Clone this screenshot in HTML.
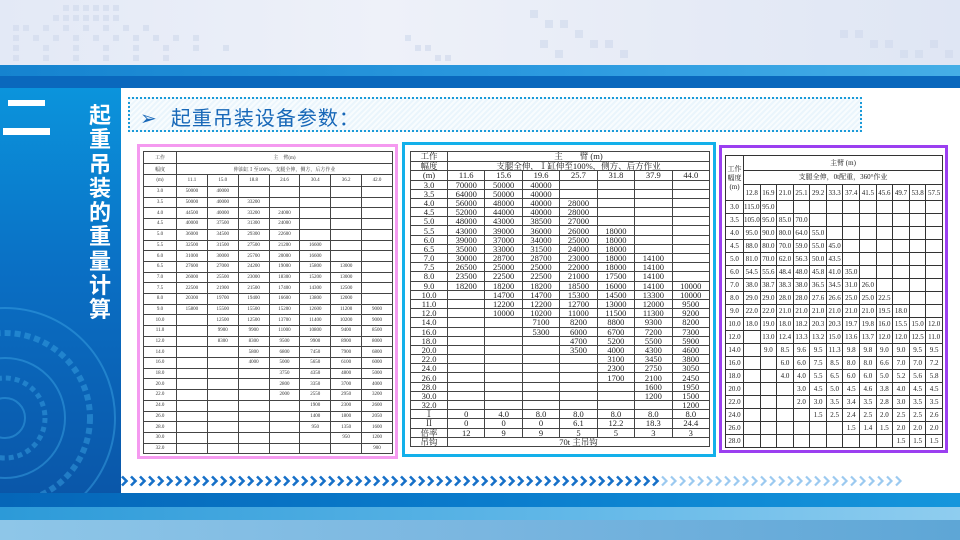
<!DOCTYPE html>
<html><head><meta charset="utf-8">
<style>
*{margin:0;padding:0;box-sizing:border-box}
body{width:960px;height:540px;overflow:hidden;position:relative;background:#fff;font-family:"Liberation Serif","Noto Serif CJK SC",serif}
.abs{position:absolute}
#top{left:0;top:0;width:960px;height:65px;background:linear-gradient(90deg,#e3e9f6,#eef1f9 40%,#e6ebf6 70%,#dfe6f4)}
#s1{left:0;top:65px;width:960px;height:11px;background:linear-gradient(90deg,#1583cf,#2d9be0 60%,#45aee6)}
#s2{left:0;top:76px;width:960px;height:12px;background:#0a68bd}
#left{left:0;top:88px;width:121px;height:409px;background:linear-gradient(180deg,#0b94dc,#0a6fc4 45%,#0a56a8)}
#b1{left:0;top:493px;width:960px;height:14px;background:linear-gradient(90deg,#0566b8,#0a7ccc 50%,#1596dc)}
#b2{left:0;top:507px;width:960px;height:13px;background:linear-gradient(90deg,#2c9ad8,#62b8e8 60%,#8fcdef)}
#b3{left:0;top:520px;width:960px;height:20px;background:linear-gradient(90deg,#8ec6e8,#7ab6e0 50%,#5ea6d6)}
.vt{color:#fff;font-family:"Liberation Sans","Noto Sans CJK SC",sans-serif;font-weight:bold;font-size:22px;line-height:24.3px;width:24px;text-align:center}
#hdr{left:128px;top:97px;width:734px;height:35px;border:2px dotted #1a9ad8;background:repeating-linear-gradient(135deg,#eaf5fc 0 2px,#f8fcfe 2px 4px)}
#hdr span{position:absolute;left:10px;top:3px;font-family:"Liberation Sans","Noto Sans CJK SC",sans-serif;font-size:20px;color:#1868b8;letter-spacing:1px}
table{border-collapse:collapse;table-layout:fixed;position:absolute;background:#fff}
td{border:1px solid #444;text-align:center;padding:0;overflow:hidden;white-space:nowrap}
#t1 td{font-size:5px;height:10.7px;color:#333}
#t1 .h td{height:11.7px}
#t2 td{font-size:8.5px;height:9.2px;line-height:8px;color:#222}
#t2 .h td{height:9.5px}
#t3 td{font-size:7px;height:13px;color:#222;border-color:#333}
#t3 .h td{height:14.5px}
</style></head><body>
<div class="abs" id="top">
<svg width="960" height="65" style="position:absolute;left:0;top:0">
<g fill="#d3dcee" opacity=".7">
<rect x="63" y="5" width="6" height="6"/><rect x="73" y="5" width="6" height="6"/><rect x="83" y="5" width="6" height="6"/><rect x="93" y="5" width="6" height="6"/><rect x="103" y="5" width="6" height="6"/><rect x="113" y="5" width="6" height="6"/>
<rect x="53" y="15" width="6" height="6"/><rect x="63" y="15" width="6" height="6"/><rect x="73" y="15" width="6" height="6"/><rect x="83" y="15" width="6" height="6"/><rect x="93" y="15" width="6" height="6"/><rect x="103" y="15" width="6" height="6"/><rect x="113" y="15" width="6" height="6"/>
<rect x="13" y="25" width="6" height="6"/><rect x="23" y="25" width="6" height="6"/><rect x="43" y="25" width="6" height="6"/><rect x="63" y="25" width="6" height="6"/><rect x="83" y="25" width="6" height="6"/><rect x="103" y="25" width="6" height="6"/><rect x="123" y="25" width="6" height="6"/><rect x="143" y="25" width="6" height="6"/>
<rect x="13" y="35" width="6" height="6"/><rect x="33" y="35" width="6" height="6"/><rect x="53" y="35" width="6" height="6"/><rect x="73" y="35" width="6" height="6"/><rect x="93" y="35" width="6" height="6"/><rect x="113" y="35" width="6" height="6"/><rect x="133" y="35" width="6" height="6"/><rect x="153" y="35" width="6" height="6"/><rect x="173" y="35" width="6" height="6"/><rect x="193" y="35" width="6" height="6"/>
<rect x="13" y="45" width="6" height="6"/><rect x="43" y="45" width="6" height="6"/><rect x="73" y="45" width="6" height="6"/><rect x="103" y="45" width="6" height="6"/><rect x="133" y="45" width="6" height="6"/><rect x="163" y="45" width="6" height="6"/><rect x="193" y="45" width="6" height="6"/><rect x="223" y="45" width="6" height="6"/>
<rect x="13" y="55" width="6" height="6"/><rect x="43" y="55" width="6" height="6"/><rect x="73" y="55" width="6" height="6"/><rect x="103" y="55" width="6" height="6"/><rect x="133" y="55" width="6" height="6"/><rect x="163" y="55" width="6" height="6"/>
<rect x="405" y="35" width="6" height="6"/><rect x="415" y="45" width="6" height="6"/><rect x="425" y="45" width="6" height="6"/><rect x="435" y="55" width="6" height="6"/><rect x="445" y="55" width="6" height="6"/>
<rect x="530" y="10" width="8" height="8"/><rect x="545" y="20" width="8" height="8"/><rect x="560" y="20" width="8" height="8"/><rect x="575" y="30" width="8" height="8"/><rect x="590" y="40" width="8" height="8"/><rect x="605" y="40" width="8" height="8"/><rect x="540" y="40" width="8" height="8"/><rect x="555" y="50" width="8" height="8"/><rect x="620" y="50" width="8" height="8"/>
<rect x="840" y="30" width="8" height="8"/><rect x="855" y="30" width="8" height="8"/><rect x="870" y="40" width="8" height="8"/><rect x="885" y="40" width="8" height="8"/><rect x="900" y="50" width="8" height="8"/><rect x="915" y="50" width="8" height="8"/><rect x="930" y="40" width="8" height="8"/><rect x="945" y="50" width="8" height="8"/>
</g></svg></div>
<div class="abs" id="s1"></div><div class="abs" id="s2"></div>
<div class="abs" id="left">
<svg width="121" height="409" style="position:absolute;left:0;top:0" fill="none" stroke="#3fa8e6" stroke-opacity=".45">
<circle cx="5" cy="330" r="110" stroke-width="2"/><circle cx="5" cy="330" r="85" stroke-width="6" stroke-dasharray="6 4"/><circle cx="5" cy="330" r="60" stroke-width="2"/><circle cx="5" cy="330" r="40" stroke-width="5" stroke-dasharray="5 4"/><circle cx="5" cy="330" r="20" stroke-width="2"/>
</svg>
<div class="abs" style="left:8px;top:12px;width:37px;height:6px;background:#fff"></div>
<div class="abs" style="left:3px;top:40px;width:47px;height:7px;background:#fff"></div>
<div class="abs vt" style="left:88px;top:16px">起<br>重<br>吊<br>装<br>的<br>重<br>量<br>计<br>算</div>
</div>
<div class="abs" id="hdr"><span>➢&nbsp; 起重吊装设备参数：</span></div>

<div class="abs" style="left:137px;top:144px;width:261px;height:315px;border:3px solid #f59af0;background:#fff"></div>
<table id="t1" style="left:143px;top:151px;width:250px">
<colgroup><col style="width:33px"><col><col><col><col><col><col><col></colgroup>
<tr class="h"><td>工作</td><td colspan="7">主　臂(m)</td></tr>
<tr class="h"><td>幅度</td><td colspan="7">伸油缸Ⅰ至100%，支腿全伸，侧方，后方作业</td></tr>
<tr class="h"><td>(m)</td><td>11.1</td><td>15.0</td><td>18.8</td><td>24.6</td><td>30.4</td><td>36.2</td><td>42.0</td></tr>
<tr><td>3.0</td><td>50000</td><td>40000</td><td></td><td></td><td></td><td></td><td></td></tr>
<tr><td>3.5</td><td>50000</td><td>40000</td><td>33200</td><td></td><td></td><td></td><td></td></tr>
<tr><td>4.0</td><td>44500</td><td>40000</td><td>33200</td><td>24000</td><td></td><td></td><td></td></tr>
<tr><td>4.5</td><td>40000</td><td>37500</td><td>31300</td><td>24000</td><td></td><td></td><td></td></tr>
<tr><td>5.0</td><td>36000</td><td>34500</td><td>29300</td><td>22600</td><td></td><td></td><td></td></tr>
<tr><td>5.5</td><td>32500</td><td>31500</td><td>27500</td><td>21200</td><td>16600</td><td></td><td></td></tr>
<tr><td>6.0</td><td>31000</td><td>30000</td><td>25700</td><td>20000</td><td>16600</td><td></td><td></td></tr>
<tr><td>6.5</td><td>27600</td><td>27000</td><td>24200</td><td>19000</td><td>15800</td><td>13000</td><td></td></tr>
<tr><td>7.0</td><td>26000</td><td>25500</td><td>23000</td><td>18300</td><td>15200</td><td>13000</td><td></td></tr>
<tr><td>7.5</td><td>22500</td><td>21900</td><td>21500</td><td>17400</td><td>14300</td><td>12500</td><td></td></tr>
<tr><td>8.0</td><td>20300</td><td>19700</td><td>19400</td><td>16600</td><td>13800</td><td>12000</td><td></td></tr>
<tr><td>9.0</td><td>15800</td><td>15500</td><td>15500</td><td>15200</td><td>12600</td><td>11200</td><td>9000</td></tr>
<tr><td>10.0</td><td></td><td>12500</td><td>12500</td><td>13700</td><td>11400</td><td>10200</td><td>9000</td></tr>
<tr><td>11.0</td><td></td><td>9900</td><td>9900</td><td>11000</td><td>10800</td><td>9400</td><td>8500</td></tr>
<tr><td>12.0</td><td></td><td>8300</td><td>8300</td><td>9500</td><td>9900</td><td>8900</td><td>8000</td></tr>
<tr><td>14.0</td><td></td><td></td><td>5800</td><td>6800</td><td>7450</td><td>7900</td><td>6800</td></tr>
<tr><td>16.0</td><td></td><td></td><td>4000</td><td>5000</td><td>5650</td><td>6100</td><td>6000</td></tr>
<tr><td>18.0</td><td></td><td></td><td></td><td>3750</td><td>4350</td><td>4800</td><td>5000</td></tr>
<tr><td>20.0</td><td></td><td></td><td></td><td>2800</td><td>3350</td><td>3700</td><td>4000</td></tr>
<tr><td>22.0</td><td></td><td></td><td></td><td>2000</td><td>2550</td><td>2950</td><td>3200</td></tr>
<tr><td>24.0</td><td></td><td></td><td></td><td></td><td>1900</td><td>2300</td><td>2600</td></tr>
<tr><td>26.0</td><td></td><td></td><td></td><td></td><td>1400</td><td>1800</td><td>2050</td></tr>
<tr><td>28.0</td><td></td><td></td><td></td><td></td><td>950</td><td>1350</td><td>1600</td></tr>
<tr><td>30.0</td><td></td><td></td><td></td><td></td><td></td><td>950</td><td>1200</td></tr>
<tr><td>32.0</td><td></td><td></td><td></td><td></td><td></td><td></td><td>900</td></tr>
</table>

<div class="abs" style="left:402px;top:142px;width:314px;height:315px;border:3px solid #13b0ea;background:#fff"></div>
<table id="t2" style="left:410px;top:151px;width:300px">
<colgroup><col style="width:37px"><col><col><col><col><col><col><col></colgroup>
<tr class="h"><td>工作</td><td colspan="7">主　　臂 (m)</td></tr>
<tr class="h"><td>幅度</td><td colspan="7">支腿全伸，Ⅰ缸伸至100%，侧方、后方作业</td></tr>
<tr class="h"><td>(m)</td><td>11.6</td><td>15.6</td><td>19.6</td><td>25.7</td><td>31.8</td><td>37.9</td><td>44.0</td></tr>
<tr><td>3.0</td><td>70000</td><td>50000</td><td>40000</td><td></td><td></td><td></td><td></td></tr>
<tr><td>3.5</td><td>64000</td><td>50000</td><td>40000</td><td></td><td></td><td></td><td></td></tr>
<tr><td>4.0</td><td>56000</td><td>48000</td><td>40000</td><td>28000</td><td></td><td></td><td></td></tr>
<tr><td>4.5</td><td>52000</td><td>44000</td><td>40000</td><td>28000</td><td></td><td></td><td></td></tr>
<tr><td>5.0</td><td>48000</td><td>43000</td><td>38500</td><td>27000</td><td></td><td></td><td></td></tr>
<tr><td>5.5</td><td>43000</td><td>39000</td><td>36000</td><td>26000</td><td>18000</td><td></td><td></td></tr>
<tr><td>6.0</td><td>39000</td><td>37000</td><td>34000</td><td>25000</td><td>18000</td><td></td><td></td></tr>
<tr><td>6.5</td><td>35000</td><td>33000</td><td>31500</td><td>24000</td><td>18000</td><td></td><td></td></tr>
<tr><td>7.0</td><td>30000</td><td>28700</td><td>28700</td><td>23000</td><td>18000</td><td>14100</td><td></td></tr>
<tr><td>7.5</td><td>26500</td><td>25000</td><td>25000</td><td>22000</td><td>18000</td><td>14100</td><td></td></tr>
<tr><td>8.0</td><td>23500</td><td>22500</td><td>22500</td><td>21000</td><td>17500</td><td>14100</td><td></td></tr>
<tr><td>9.0</td><td>18200</td><td>18200</td><td>18200</td><td>18500</td><td>16000</td><td>14100</td><td>10000</td></tr>
<tr><td>10.0</td><td></td><td>14700</td><td>14700</td><td>15300</td><td>14500</td><td>13300</td><td>10000</td></tr>
<tr><td>11.0</td><td></td><td>12200</td><td>12200</td><td>12700</td><td>13000</td><td>12000</td><td>9500</td></tr>
<tr><td>12.0</td><td></td><td>10000</td><td>10200</td><td>11000</td><td>11500</td><td>11300</td><td>9200</td></tr>
<tr><td>14.0</td><td></td><td></td><td>7100</td><td>8200</td><td>8800</td><td>9300</td><td>8200</td></tr>
<tr><td>16.0</td><td></td><td></td><td>5300</td><td>6000</td><td>6700</td><td>7200</td><td>7300</td></tr>
<tr><td>18.0</td><td></td><td></td><td></td><td>4700</td><td>5200</td><td>5500</td><td>5900</td></tr>
<tr><td>20.0</td><td></td><td></td><td></td><td>3500</td><td>4000</td><td>4300</td><td>4600</td></tr>
<tr><td>22.0</td><td></td><td></td><td></td><td></td><td>3100</td><td>3450</td><td>3800</td></tr>
<tr><td>24.0</td><td></td><td></td><td></td><td></td><td>2300</td><td>2750</td><td>3050</td></tr>
<tr><td>26.0</td><td></td><td></td><td></td><td></td><td>1700</td><td>2100</td><td>2450</td></tr>
<tr><td>28.0</td><td></td><td></td><td></td><td></td><td></td><td>1600</td><td>1950</td></tr>
<tr><td>30.0</td><td></td><td></td><td></td><td></td><td></td><td>1200</td><td>1500</td></tr>
<tr><td>32.0</td><td></td><td></td><td></td><td></td><td></td><td></td><td>1200</td></tr>
<tr><td>Ⅰ</td><td>0</td><td>4.0</td><td>8.0</td><td>8.0</td><td>8.0</td><td>8.0</td><td>8.0</td></tr>
<tr><td>Ⅱ</td><td>0</td><td>0</td><td>0</td><td>6.1</td><td>12.2</td><td>18.3</td><td>24.4</td></tr>
<tr><td>倍率</td><td>12</td><td>9</td><td>9</td><td>5</td><td>5</td><td>3</td><td>3</td></tr>
<tr><td>吊钩</td><td colspan="7">70t 主吊钩</td></tr>
</table>

<div class="abs" style="left:719px;top:145px;width:229px;height:308px;border:3px solid #9b3ff0;background:#fff"></div>
<table id="t3" style="left:725px;top:155px;width:218px">
<colgroup><col style="width:18px"><col><col><col><col><col><col><col><col><col><col><col><col></colgroup>
<tr class="h"><td rowspan="3" style="white-space:normal;line-height:9px">工作幅度(m)</td><td colspan="12">主臂 (m)</td></tr>
<tr class="h"><td colspan="12">支腿全伸，0t配重，360°作业</td></tr>
<tr class="h" style="height:16px"><td>12.8</td><td>16.9</td><td>21.0</td><td>25.1</td><td>29.2</td><td>33.3</td><td>37.4</td><td>41.5</td><td>45.6</td><td>49.7</td><td>53.8</td><td>57.5</td></tr>
<tr><td>3.0</td><td>115.0</td><td>95.0</td><td></td><td></td><td></td><td></td><td></td><td></td><td></td><td></td><td></td><td></td></tr>
<tr><td>3.5</td><td>105.0</td><td>95.0</td><td>85.0</td><td>70.0</td><td></td><td></td><td></td><td></td><td></td><td></td><td></td><td></td></tr>
<tr><td>4.0</td><td>95.0</td><td>90.0</td><td>80.0</td><td>64.0</td><td>55.0</td><td></td><td></td><td></td><td></td><td></td><td></td><td></td></tr>
<tr><td>4.5</td><td>88.0</td><td>80.0</td><td>70.0</td><td>59.0</td><td>55.0</td><td>45.0</td><td></td><td></td><td></td><td></td><td></td><td></td></tr>
<tr><td>5.0</td><td>81.0</td><td>70.0</td><td>62.0</td><td>56.3</td><td>50.0</td><td>43.5</td><td></td><td></td><td></td><td></td><td></td><td></td></tr>
<tr><td>6.0</td><td>54.5</td><td>55.6</td><td>48.4</td><td>48.0</td><td>45.8</td><td>41.0</td><td>35.0</td><td></td><td></td><td></td><td></td><td></td></tr>
<tr><td>7.0</td><td>38.0</td><td>38.7</td><td>38.3</td><td>38.0</td><td>36.5</td><td>34.5</td><td>31.0</td><td>26.0</td><td></td><td></td><td></td><td></td></tr>
<tr><td>8.0</td><td>29.0</td><td>29.0</td><td>28.0</td><td>28.0</td><td>27.6</td><td>26.6</td><td>25.0</td><td>25.0</td><td>22.5</td><td></td><td></td><td></td></tr>
<tr><td>9.0</td><td>22.0</td><td>22.0</td><td>21.0</td><td>21.0</td><td>21.0</td><td>21.0</td><td>21.0</td><td>21.0</td><td>19.5</td><td>18.0</td><td></td><td></td></tr>
<tr><td>10.0</td><td>18.0</td><td>19.0</td><td>18.0</td><td>18.2</td><td>20.3</td><td>20.3</td><td>19.7</td><td>19.8</td><td>16.0</td><td>15.5</td><td>15.0</td><td>12.0</td></tr>
<tr><td>12.0</td><td></td><td>13.0</td><td>12.4</td><td>13.3</td><td>13.2</td><td>15.0</td><td>13.6</td><td>13.7</td><td>12.0</td><td>12.0</td><td>12.5</td><td>11.0</td></tr>
<tr><td>14.0</td><td></td><td>9.0</td><td>8.5</td><td>9.6</td><td>9.5</td><td>11.3</td><td>9.8</td><td>9.8</td><td>9.0</td><td>9.0</td><td>9.5</td><td>9.5</td></tr>
<tr><td>16.0</td><td></td><td></td><td>6.0</td><td>6.0</td><td>7.5</td><td>8.5</td><td>8.0</td><td>8.0</td><td>6.6</td><td>7.0</td><td>7.0</td><td>7.2</td></tr>
<tr><td>18.0</td><td></td><td></td><td>4.0</td><td>4.0</td><td>5.5</td><td>6.5</td><td>6.0</td><td>6.0</td><td>5.0</td><td>5.2</td><td>5.6</td><td>5.8</td></tr>
<tr><td>20.0</td><td></td><td></td><td></td><td>3.0</td><td>4.5</td><td>5.0</td><td>4.5</td><td>4.6</td><td>3.8</td><td>4.0</td><td>4.5</td><td>4.5</td></tr>
<tr><td>22.0</td><td></td><td></td><td></td><td>2.0</td><td>3.0</td><td>3.5</td><td>3.4</td><td>3.5</td><td>2.8</td><td>3.0</td><td>3.5</td><td>3.5</td></tr>
<tr><td>24.0</td><td></td><td></td><td></td><td></td><td>1.5</td><td>2.5</td><td>2.4</td><td>2.5</td><td>2.0</td><td>2.5</td><td>2.5</td><td>2.6</td></tr>
<tr><td>26.0</td><td></td><td></td><td></td><td></td><td></td><td></td><td>1.5</td><td>1.4</td><td>1.5</td><td>2.0</td><td>2.0</td><td>2.0</td></tr>
<tr><td>28.0</td><td></td><td></td><td></td><td></td><td></td><td></td><td></td><td></td><td></td><td>1.5</td><td>1.5</td><td>1.5</td></tr>
</table>

<svg class="abs" style="left:121px;top:475px" width="800" height="12">
<defs><pattern id="cv" width="9" height="12" patternUnits="userSpaceOnUse"><path d="M1 1.5 L5.5 6 L1 10.5" fill="none" stroke="#1670c8" stroke-width="2.6"/></pattern>
<pattern id="cv2" width="9" height="12" patternUnits="userSpaceOnUse"><path d="M1 1.5 L5.5 6 L1 10.5" fill="none" stroke="#9ccaf0" stroke-width="2.2"/></pattern></defs>
<rect x="0" y="0" width="540" height="12" fill="url(#cv)"/>
<rect x="540" y="0" width="243" height="12" fill="url(#cv2)"/>
</svg>

<div class="abs" id="b1"></div><div class="abs" id="b2"></div><div class="abs" id="b3"></div>
</body></html>
